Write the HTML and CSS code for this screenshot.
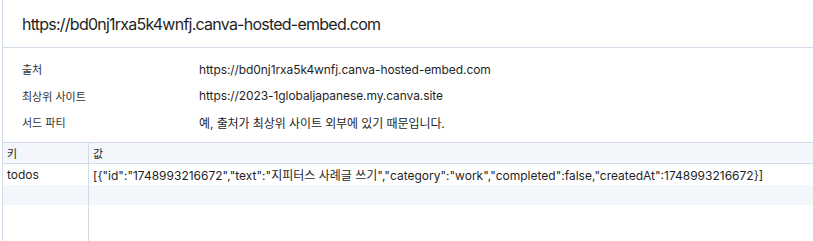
FILE: index.html
```html
<!DOCTYPE html>
<html lang="ko">
<head>
<meta charset="utf-8">
<link rel="stylesheet" href="styles.css">
</head>
<body>
<div class="panel">
  <div class="header"><span class="title">https://bd0nj1rxa5k4wnfj.canva-hosted-embed.com</span></div>
  <div class="info">
    <div class="row"><span class="label">출처</span><span class="value">https://bd0nj1rxa5k4wnfj.canva-hosted-embed.com</span></div>
    <div class="row"><span class="label">최상위 사이트</span><span class="value">https://2023-1globaljapanese.my.canva.site</span></div>
    <div class="row"><span class="label">서드 파티</span><span class="value">예, 출처가 최상위 사이트 외부에 있기 때문입니다.</span></div>
  </div>
  <div class="grid">
    <div class="tr head"><div class="td key">키</div><div class="td val">값</div></div>
    <div class="tr"><div class="td key">todos</div><div class="td val">[{"id":"1748993216672","text":"지피터스 사례글 쓰기","category":"work","completed":false,"createdAt":1748993216672}]</div></div>
    <div class="tr stripe"><div class="td key"></div><div class="td val"></div></div>
    <div class="tr fill"><div class="td key"></div><div class="td val"></div></div>
  </div>
</div>
</body>
</html>
```
FILE: styles.css
```css
* { box-sizing: border-box; }
html, body { margin: 0; padding: 0; background: #fff; height: 100%; }
body {
  font-family: Inter, "Noto Sans CJK KR", sans-serif;
  color: #1f1f1f;
  overflow: hidden;
}
.panel {
  margin-left: 2px;
  border-left: 1px solid #d3dbe8;
  height: 241px;
  display: flex;
  flex-direction: column;
}
.header {
  height: 48px;
  border-bottom: 1px solid #d3dbe8;
  padding-left: 19px;
  display: flex;
  align-items: center;
}
.title { font-size: 16px; letter-spacing: -0.76px; color: #1f1f1f; }
.info { padding: 8px 0 0 19px; height: 94px; }
.info .row { display: flex; height: 26.5px; align-items: center; }
.label { width: 177px; font-size: 11px; color: #333; }
.value { font-size: 12px; letter-spacing: -0.08px; color: #1f1f1f; }
.grid { flex: 1; display: flex; flex-direction: column; border-top: 1px solid #d3dbe8; }
.tr { display: flex; height: 21px; }
.tr.head { background: #f3f6fb; border-bottom: 1px solid #d3dbe8; height: 21px; }
.tr.stripe { background: #f3f6fb; height: 20px; }
.tr.fill { flex: 1; }
.td { display: flex; align-items: center; font-size: 12px; white-space: nowrap; overflow: hidden; }
.td.key { width: 86px; padding-left: 4px; border-right: 1px solid #d3dbe8; }
.td.val { flex: 1; padding-left: 4px; }
.head .td { font-size: 11px; }
```
